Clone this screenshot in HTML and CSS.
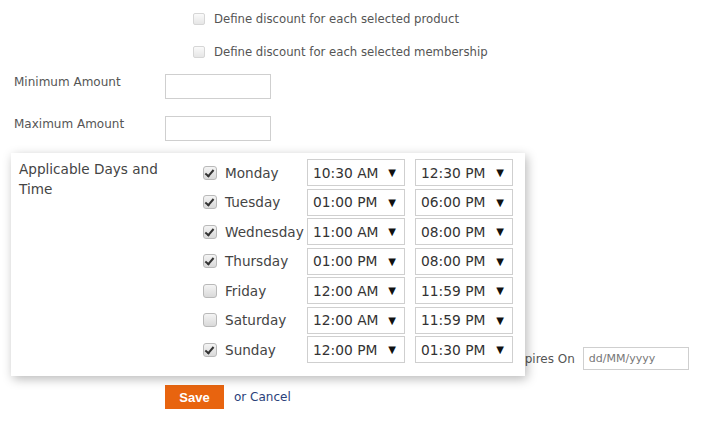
FILE: index.html
```html
<!DOCTYPE html>
<html>
<head>
<meta charset="utf-8">
<link rel="stylesheet" href="styles.css">
</head>
<body>
<div class="form">
  <div class="opt"><span class="cb-light"></span><span class="opt-text">Define discount for each selected product</span></div>
  <div class="opt"><span class="cb-light"></span><span class="opt-text">Define discount for each selected membership</span></div>
  <div class="field first"><label class="flabel">Minimum Amount</label><span class="input"></span></div>
  <div class="field"><label class="flabel">Maximum Amount</label><span class="input"></span></div>
  <div class="dates">
    <span class="dlabel">Expires On</span><span class="input dinput"><span class="ph">dd/MM/yyyy</span></span>
  </div>
  <div class="actions"><span class="save">Save</span><a class="cancel">or Cancel</a></div>
</div>

<div class="panel">
  <div class="plabel">Applicable Days and Time</div>
  <div class="days">
    <div class="day"><span class="cb on"></span><span class="dname">Monday</span><span class="sel">10:30 AM<i>▼</i></span><span class="sel">12:30 PM<i>▼</i></span></div>
    <div class="day"><span class="cb on"></span><span class="dname">Tuesday</span><span class="sel">01:00 PM<i>▼</i></span><span class="sel">06:00 PM<i>▼</i></span></div>
    <div class="day"><span class="cb on"></span><span class="dname">Wednesday</span><span class="sel">11:00 AM<i>▼</i></span><span class="sel">08:00 PM<i>▼</i></span></div>
    <div class="day"><span class="cb on"></span><span class="dname">Thursday</span><span class="sel">01:00 PM<i>▼</i></span><span class="sel">08:00 PM<i>▼</i></span></div>
    <div class="day"><span class="cb"></span><span class="dname">Friday</span><span class="sel">12:00 AM<i>▼</i></span><span class="sel">11:59 PM<i>▼</i></span></div>
    <div class="day"><span class="cb"></span><span class="dname">Saturday</span><span class="sel">12:00 AM<i>▼</i></span><span class="sel">11:59 PM<i>▼</i></span></div>
    <div class="day"><span class="cb on"></span><span class="dname">Sunday</span><span class="sel">12:00 PM<i>▼</i></span><span class="sel">01:30 PM<i>▼</i></span></div>
  </div>
</div>
</body>
</html>
```

FILE: styles.css
```css
html, body {
  margin: 0;
  padding: 0;
  background: #fff;
}
body {
  font-family: "DejaVu Sans", Verdana, sans-serif;
  color: #555;
  font-size: 12px;
  position: relative;
  width: 706px;
  height: 422px;
  overflow: hidden;
}
.form {
  padding-top: 2px;
}
.opt {
  height: 33px;
  display: flex;
  align-items: center;
  padding-left: 193px;
}
.cb-light {
  width: 10px;
  height: 10px;
  border: 1px solid #d6d6d6;
  border-radius: 2px;
  background: linear-gradient(#fafafa, #e6e6e6);
  margin-right: 9px;
}
.opt-text {
  color: #555;
  font-size: 11.7px;
}
.field {
  display: flex;
  align-items: flex-start;
  padding-left: 14px;
  margin-bottom: 17px;
}
.field.first {
  margin-top: 6px;
}
.flabel {
  width: 151px;
  line-height: 16px;
  color: #555;
}
.input {
  display: block;
  width: 104px;
  height: 23px;
  border: 1px solid #cfcfcf;
  background: #fff;
}
.dates {
  display: flex;
  align-items: center;
  margin-top: 206px;
  padding-left: 510px;
}
.dlabel {
  margin-right: 8px;
  font-size: 12px;
}
.dates .dinput {
  height: 21px;
  display: flex;
  align-items: center;
  padding-left: 5px;
  width: 99px;
}
.ph {
  color: #777;
  font-size: 11px;
}
.actions {
  display: flex;
  align-items: center;
  padding-left: 165px;
  margin-top: 15px;
}
.save {
  width: 59px;
  height: 24px;
  background: #e8640f;
  color: #fff;
  font-family: "Liberation Sans", Arial, sans-serif;
  font-weight: bold;
  font-size: 13px;
  display: flex;
  align-items: center;
  justify-content: center;
}
.cancel {
  margin-left: 10px;
  color: #2b3f7a;
  font-size: 12px;
}
.panel {
  position: absolute;
  left: 11px;
  top: 153px;
  width: 514px;
  height: 223px;
  box-sizing: border-box;
  background: #fff;
  box-shadow: 2px 3px 10px rgba(0,0,0,0.28);
  display: flex;
  padding: 6px 0 0 8px;
  color: #444;
  font-size: 13.6px;
}
.plabel {
  width: 176px;
  line-height: 20px;
  color: #444;
}
.days {
  display: flex;
  flex-direction: column;
  gap: 2.5px;
  padding-left: 8px;
}
.day {
  display: flex;
  align-items: center;
  height: 27px;
}
.cb {
  width: 12px;
  height: 12px;
  border: 1px solid #b9b9b9;
  border-radius: 3px;
  background: linear-gradient(#f4f4f4, #d9d9d9);
  margin-right: 8px;
  position: relative;
}
.cb.on::after {
  content: "";
  position: absolute;
  left: 3px;
  top: 1px;
  width: 3px;
  height: 7px;
  border: solid #333;
  border-width: 0 2px 2px 0;
  transform: rotate(40deg);
}
.dname {
  width: 82px;
  white-space: nowrap;
}
.sel {
  box-sizing: border-box;
  width: 98px;
  height: 27px;
  border: 1px solid #cfcfcf;
  display: flex;
  align-items: center;
  padding-left: 5px;
  margin-right: 10px;
  color: #333;
  font-size: 13.8px;
}
.sel i {
  font-style: normal;
  font-size: 10px;
  margin-left: auto;
  margin-right: 8px;
  color: #111;
}
```
